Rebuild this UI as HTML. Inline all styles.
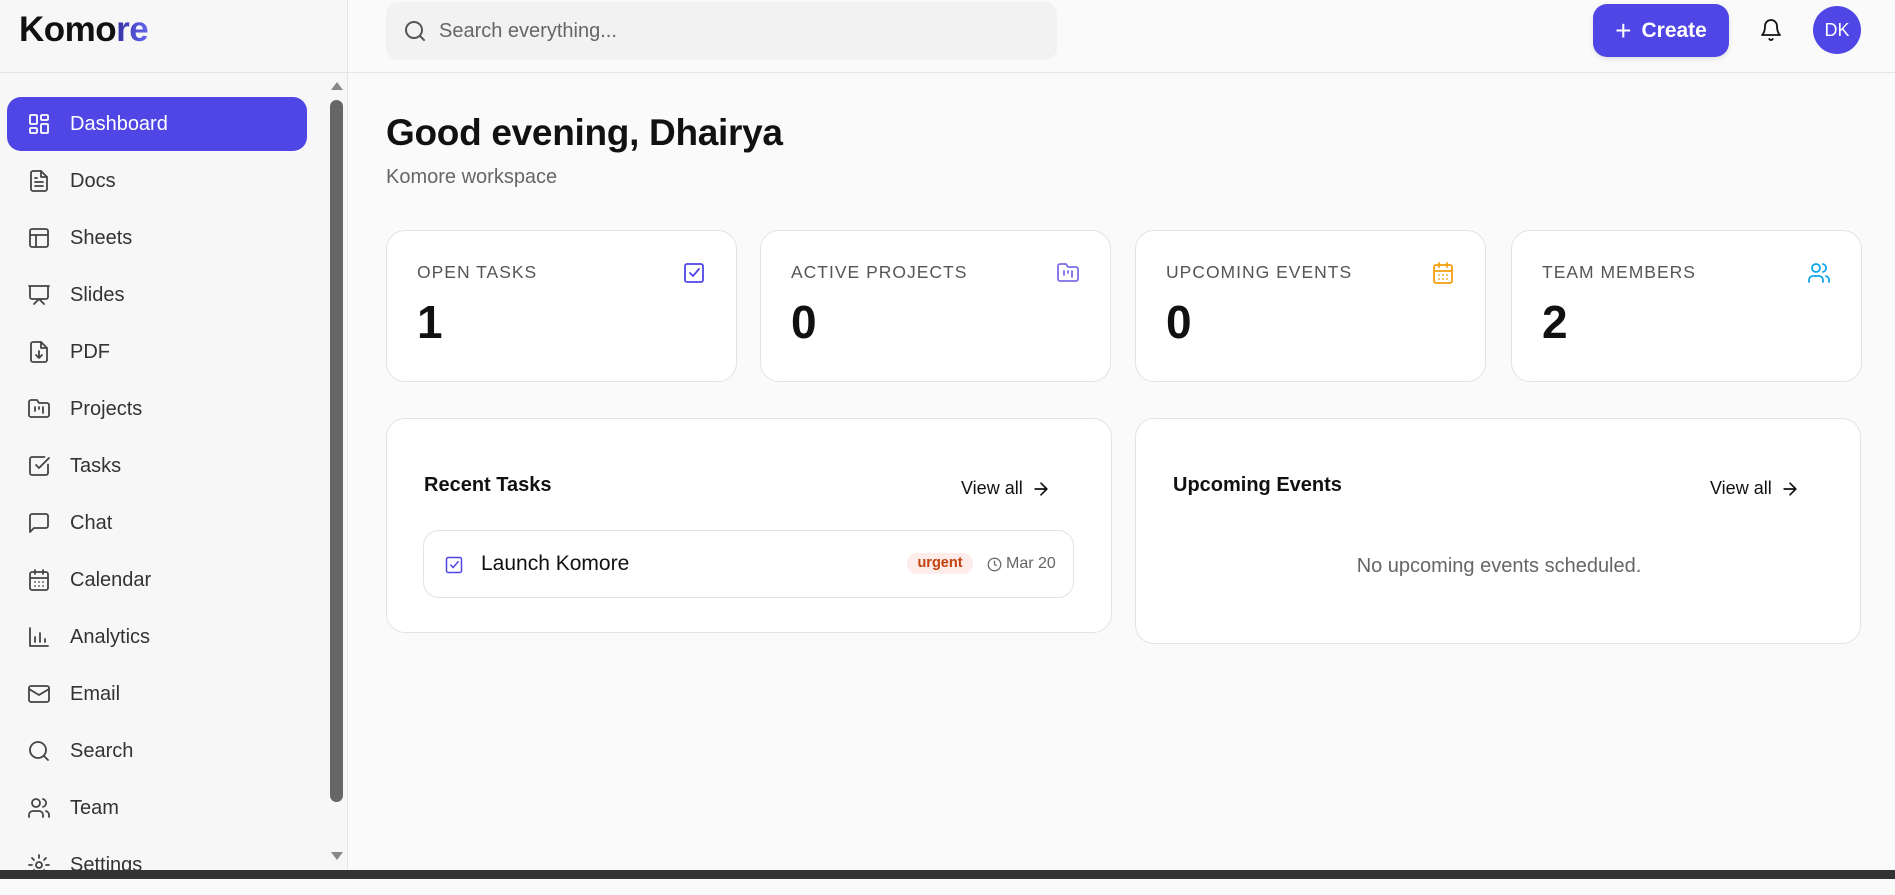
<!DOCTYPE html>
<html><head><meta charset="utf-8"><style>
*{box-sizing:border-box;margin:0;padding:0}
body{width:1895px;height:879px;overflow:hidden;background:#fafafa;font-family:"Liberation Sans",sans-serif;color:#111;position:relative}
.side{position:absolute;left:0;top:0;width:348px;height:879px;background:#f7f7f7;border-right:1px solid #e5e5e5}
.logo{position:absolute;left:19px;top:10px;font-size:35px;font-weight:bold;letter-spacing:-0.5px}
.logo span{background:linear-gradient(90deg,#3730a3,#6366f1);-webkit-background-clip:text;color:transparent}
.hline{position:absolute;left:0;top:72px;width:1895px;height:1px;background:#e5e5e5}
.nav{position:absolute;left:7px;top:97px;width:300px}
.item{height:54px;margin-bottom:3px;display:flex;align-items:center;padding-left:20px;font-size:20px;color:#333;border-radius:14px}
.item svg{width:24px;height:24px;margin-right:19px;fill:none;stroke:#444;stroke-width:1.8;stroke-linecap:round;stroke-linejoin:round}
.item.act{background:#4f46e5;color:#fff}
.item.act svg{stroke:#fff}
.sb{position:absolute;left:330px;top:100px;width:13px;height:702px;background:#666;border-radius:7px}
.arr{position:absolute;left:331px;width:0;height:0;border-left:6px solid transparent;border-right:6px solid transparent}
.search{position:absolute;left:386px;top:2px;width:671px;height:58px;background:#f2f2f2;border-radius:12px;display:flex;align-items:center;padding-left:17px;font-size:20px;color:#666}
.create{position:absolute;left:1593px;top:4px;width:136px;height:53px;background:#4f46e5;border-radius:14px;color:#fff;font-size:21px;font-weight:bold;display:flex;align-items:center;justify-content:center;gap:10px;box-shadow:0 2px 6px rgba(0,0,0,.1)}
.av{position:absolute;left:1813px;top:6px;width:48px;height:48px;border-radius:50%;background:#4f46e5;color:#fff;font-size:18px;display:flex;align-items:center;justify-content:center}
h1{position:absolute;left:386px;top:112px;font-size:37px;font-weight:bold;letter-spacing:-0.3px}
.sub{position:absolute;left:386px;top:166px;font-size:20px;color:#666}
.card{position:absolute;background:#fff;border:1px solid #e3e3e3;border-radius:19px}
.stat{top:230px;height:152px;width:351px}
.lab{position:absolute;left:30px;top:31px;font-size:17.5px;color:#555;letter-spacing:1px}
.num{position:absolute;left:30px;top:64px;font-size:46px;font-weight:bold}
.ic{position:absolute;right:30px;top:30px;width:24px;height:24px;fill:none;stroke-width:1.8;stroke-linecap:round;stroke-linejoin:round}
.ttl{position:absolute;left:37px;top:55px;font-size:20px;font-weight:bold}
.va{position:absolute;top:59px;font-size:18px;display:flex;align-items:center;gap:8px}
.row{position:absolute;left:36px;top:111px;width:651px;height:68px;border:1px solid #e3e3e3;border-radius:16px}
</style></head><body>
<div class="side">
<div class="logo">Komo<span>re</span></div>
<div class="nav">
<div class="item act"><svg viewBox="0 0 24 24"><rect x="3" y="3" width="7" height="9" rx="1"/><rect x="14" y="3" width="7" height="5" rx="1"/><rect x="14" y="12" width="7" height="9" rx="1"/><rect x="3" y="16" width="7" height="5" rx="1"/></svg>Dashboard</div>
<div class="item"><svg viewBox="0 0 24 24"><path d="M14 2H6a2 2 0 0 0-2 2v16a2 2 0 0 0 2 2h12a2 2 0 0 0 2-2V8z"/><path d="M14 2v6h6M8 13h8M8 17h8M8 9h2"/></svg>Docs</div>
<div class="item"><svg viewBox="0 0 24 24"><rect x="3" y="3" width="18" height="18" rx="2"/><path d="M3 9h18M9 21V9"/></svg>Sheets</div>
<div class="item"><svg viewBox="0 0 24 24"><path d="M2 3h20M21 3v11a2 2 0 0 1-2 2H5a2 2 0 0 1-2-2V3M7 21l5-5 5 5"/></svg>Slides</div>
<div class="item"><svg viewBox="0 0 24 24"><path d="M14 2H6a2 2 0 0 0-2 2v16a2 2 0 0 0 2 2h12a2 2 0 0 0 2-2V8z"/><path d="M14 2v6h6M12 11v7M9 15l3 3 3-3"/></svg>PDF</div>
<div class="item"><svg viewBox="0 0 24 24"><path d="M20 20a2 2 0 0 0 2-2V8a2 2 0 0 0-2-2h-8l-2-3H4a2 2 0 0 0-2 2v13a2 2 0 0 0 2 2z"/><path d="M8 10v4M12 10v2M16 10v6"/></svg>Projects</div>
<div class="item"><svg viewBox="0 0 24 24"><path d="M21 10.5V19a2 2 0 0 1-2 2H5a2 2 0 0 1-2-2V5a2 2 0 0 1 2-2h12.5"/><path d="m9 11 3 3L22 4"/></svg>Tasks</div>
<div class="item"><svg viewBox="0 0 24 24"><path d="M21 15a2 2 0 0 1-2 2H7l-4 4V5a2 2 0 0 1 2-2h14a2 2 0 0 1 2 2z"/></svg>Chat</div>
<div class="item"><svg viewBox="0 0 24 24"><rect x="3" y="4" width="18" height="18" rx="2"/><path d="M16 2v4M8 2v4M3 10h18M8 14h.01M12 14h.01M16 14h.01M8 18h.01M12 18h.01M16 18h.01"/></svg>Calendar</div>
<div class="item"><svg viewBox="0 0 24 24"><path d="M3 3v18h18M8 17v-5M13 17V8M18 17v-3"/></svg>Analytics</div>
<div class="item"><svg viewBox="0 0 24 24"><rect x="2" y="4" width="20" height="16" rx="2"/><path d="m22 7-10 6L2 7"/></svg>Email</div>
<div class="item"><svg viewBox="0 0 24 24"><circle cx="11" cy="11" r="8"/><path d="m21 21-4.3-4.3"/></svg>Search</div>
<div class="item"><svg viewBox="0 0 24 24"><path d="M16 21v-2a4 4 0 0 0-4-4H6a4 4 0 0 0-4 4v2"/><circle cx="9" cy="7" r="4"/><path d="M22 21v-2a4 4 0 0 0-3-3.9M16 3.1a4 4 0 0 1 0 7.8"/></svg>Team</div>
<div class="item"><svg viewBox="0 0 24 24"><circle cx="12" cy="12" r="3"/><path d="M12 2v3M12 19v3M2 12h3M19 12h3M5 5l2 2M17 17l2 2M5 19l2-2M17 7l2-2"/></svg>Settings</div>
</div>
<div class="arr" style="top:82px;border-bottom:8px solid #888"></div>
<div class="sb"></div>
<div class="arr" style="top:852px;border-top:8px solid #888"></div>
</div>
<div class="hline"></div>
<div class="search"><svg width="24" height="24" viewBox="0 0 24 24" fill="none" stroke="#555" stroke-width="2" stroke-linecap="round"><circle cx="11" cy="11" r="8"/><path d="m21 21-4.3-4.3"/></svg><span style="margin-left:12px">Search everything...</span></div>
<div class="create"><span style="font-size:28px;font-weight:normal">+</span>Create</div>
<svg style="position:absolute;left:1759px;top:18px" width="24" height="24" viewBox="0 0 24 24" fill="none" stroke="#111" stroke-width="1.8" stroke-linecap="round" stroke-linejoin="round"><path d="M6 8a6 6 0 0 1 12 0c0 7 3 9 3 9H3s3-2 3-9M10.3 21a1.9 1.9 0 0 0 3.4 0"/></svg>
<div class="av">DK</div>
<h1>Good evening, Dhairya</h1>
<div class="sub">Komore workspace</div>
<div class="card stat" style="left:386px"><div class="lab">OPEN TASKS</div><div class="num">1</div><svg class="ic" viewBox="0 0 24 24" stroke="#4f46e5"><rect x="3" y="3" width="18" height="18" rx="2"/><path d="m8 12 3 3 6-7"/></svg></div>
<div class="card stat" style="left:760px"><div class="lab">ACTIVE PROJECTS</div><div class="num">0</div><svg class="ic" viewBox="0 0 24 24" stroke="#7c6ee8"><path d="M20 20a2 2 0 0 0 2-2V8a2 2 0 0 0-2-2h-8l-2-3H4a2 2 0 0 0-2 2v13a2 2 0 0 0 2 2z"/><path d="M8 10v4M12 10v2M16 10v6"/></svg></div>
<div class="card stat" style="left:1135px"><div class="lab">UPCOMING EVENTS</div><div class="num">0</div><svg class="ic" viewBox="0 0 24 24" stroke="#f59e0b"><rect x="3" y="4" width="18" height="18" rx="2"/><path d="M16 2v4M8 2v4M3 10h18M8 14h.01M12 14h.01M16 14h.01M8 18h.01M12 18h.01M16 18h.01"/></svg></div>
<div class="card stat" style="left:1511px"><div class="lab">TEAM MEMBERS</div><div class="num">2</div><svg class="ic" viewBox="0 0 24 24" stroke="#0ea5e9"><path d="M16 21v-2a4 4 0 0 0-4-4H6a4 4 0 0 0-4 4v2"/><circle cx="9" cy="7" r="4"/><path d="M22 21v-2a4 4 0 0 0-3-3.9M16 3.1a4 4 0 0 1 0 7.8"/></svg></div>
<div class="card" style="left:386px;top:418px;width:726px;height:215px">
<div class="ttl">Recent Tasks</div>
<div class="va" style="left:574px">View all <svg width="20" height="20" viewBox="0 0 24 24" fill="none" stroke="#111" stroke-width="2" stroke-linecap="round" stroke-linejoin="round"><path d="M5 12h14M12 5l7 7-7 7"/></svg></div>
<div class="row">
<svg style="position:absolute;left:20px;top:24px" width="20" height="20" viewBox="0 0 24 24" fill="none" stroke="#4f46e5" stroke-width="1.8" stroke-linecap="round"><rect x="3" y="3" width="18" height="18" rx="2"/><path d="m8 12 3 3 6-7"/></svg>
<div style="position:absolute;left:57px;top:21px;font-size:21px">Launch Komore</div>
<div style="position:absolute;left:483px;top:22px;width:66px;height:21px;border-radius:10px;background:#fdecea;color:#c2410c;font-size:14.5px;font-weight:bold;text-align:center;line-height:21px">urgent</div>
<svg style="position:absolute;left:563px;top:26px" width="15" height="15" viewBox="0 0 24 24" fill="none" stroke="#666" stroke-width="2"><circle cx="12" cy="12" r="10"/><path d="M12 6v6l4 2"/></svg>
<div style="position:absolute;left:582px;top:24px;font-size:16px;color:#666">Mar 20</div>
</div>
</div>
<div class="card" style="left:1135px;top:418px;width:726px;height:226px">
<div class="ttl" style="left:37px">Upcoming Events</div>
<div class="va" style="left:574px">View all <svg width="20" height="20" viewBox="0 0 24 24" fill="none" stroke="#111" stroke-width="2" stroke-linecap="round" stroke-linejoin="round"><path d="M5 12h14M12 5l7 7-7 7"/></svg></div>
<div style="position:absolute;left:0;width:726px;top:136px;text-align:center;font-size:20px;color:#666">No upcoming events scheduled.</div>
</div>
<div style="position:absolute;left:0;top:870px;width:1895px;height:9px;background:#333"></div>
</body></html>
